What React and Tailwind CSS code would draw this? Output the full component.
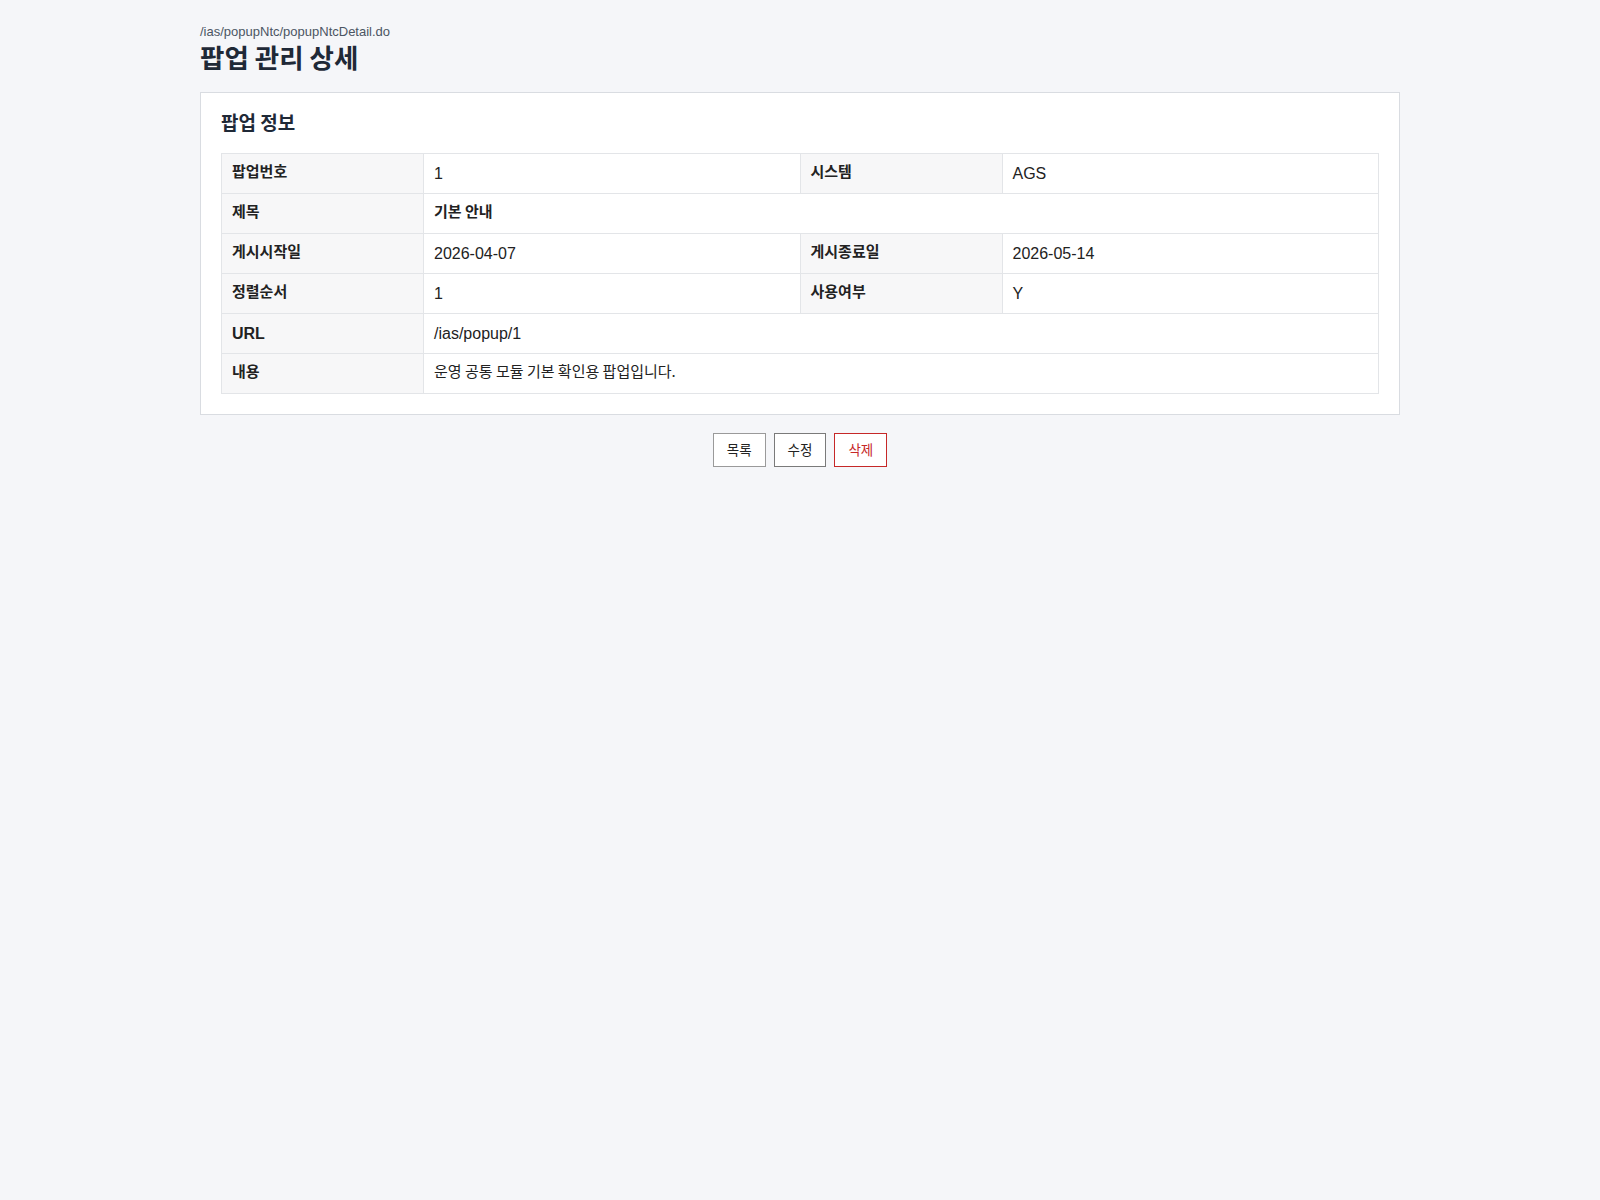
import React from "react";

const KO = "font-['Noto_Sans_CJK_KR',sans-serif]";
const LA = "font-['Liberation_Sans','Noto_Sans_CJK_KR',sans-serif]";

function Th({ children, latin }) {
  return (
    <th
      className={`w-[202px] h-[40px] border border-[#e3e5e8] bg-[#f7f7f8] px-[10px] text-left align-middle font-bold text-[#222] ${
        latin ? `${LA} text-[16px]` : `${KO} text-[15px] pb-[4px]`
      }`}
    >
      {children}
    </th>
  );
}

function Td({ children, latin = true, bold, colSpan }) {
  return (
    <td
      colSpan={colSpan}
      className={`h-[40px] border border-[#e3e5e8] bg-white px-[10px] align-middle text-[#222] ${
        latin ? `${LA} text-[16px]` : `${KO} text-[15px] pb-[4px]`
      } ${bold ? "font-bold" : "font-normal"}`}
    >
      {children}
    </td>
  );
}

export default function App() {
  return (
    <div className="min-h-screen bg-[#f5f6f9] pt-[24px]">
      <div className="mx-auto w-[1200px]">
        <div className={`${LA} text-[13px] leading-[16px] text-[#4b5563]`}>
          /ias/popupNtc/popupNtcDetail.do
        </div>
        <h1 className={`${KO} mt-[2px] text-[26.5px] leading-[30px] font-bold text-[#1f2937]`}>
          팝업 관리 상세
        </h1>
        <div className="mt-[20px] border border-[#d9dce1] bg-white p-[20px]">
          <h2 className={`${KO} -mt-[1px] text-[19px] leading-[20px] font-bold text-[#1f2937] mb-[21px]`}>
            팝업 정보
          </h2>
          <table className="w-full border-collapse">
            <tbody>
              <tr>
                <Th>팝업번호</Th>
                <Td>1</Td>
                <Th>시스템</Th>
                <Td>AGS</Td>
              </tr>
              <tr>
                <Th>제목</Th>
                <Td colSpan={3} latin={false} bold>
                  기본 안내
                </Td>
              </tr>
              <tr>
                <Th>게시시작일</Th>
                <Td>2026-04-07</Td>
                <Th>게시종료일</Th>
                <Td>2026-05-14</Td>
              </tr>
              <tr>
                <Th>정렬순서</Th>
                <Td>1</Td>
                <Th>사용여부</Th>
                <Td>Y</Td>
              </tr>
              <tr>
                <Th latin>URL</Th>
                <Td colSpan={3}>/ias/popup/1</Td>
              </tr>
              <tr>
                <Th>내용</Th>
                <Td colSpan={3} latin={false}>
                  운영 공통 모듈 기본 확인용 팝업입니다.
                </Td>
              </tr>
            </tbody>
          </table>
        </div>
        <div className="mt-[18px] flex justify-center gap-[8px]">
          <button className={`${KO} h-[34px] border border-[#9a9a9a] bg-white px-[13px] pb-[1px] text-[13.5px] text-[#222]`}>
            목록
          </button>
          <button className={`${KO} h-[34px] border border-[#7a7a7a] bg-white px-[13px] pb-[1px] text-[13.5px] text-[#222]`}>
            수정
          </button>
          <button className={`${KO} h-[34px] border border-[#c62828] bg-white px-[13px] pb-[1px] text-[13.5px] text-[#c62828]`}>
            삭제
          </button>
        </div>
      </div>
    </div>
  );
}
